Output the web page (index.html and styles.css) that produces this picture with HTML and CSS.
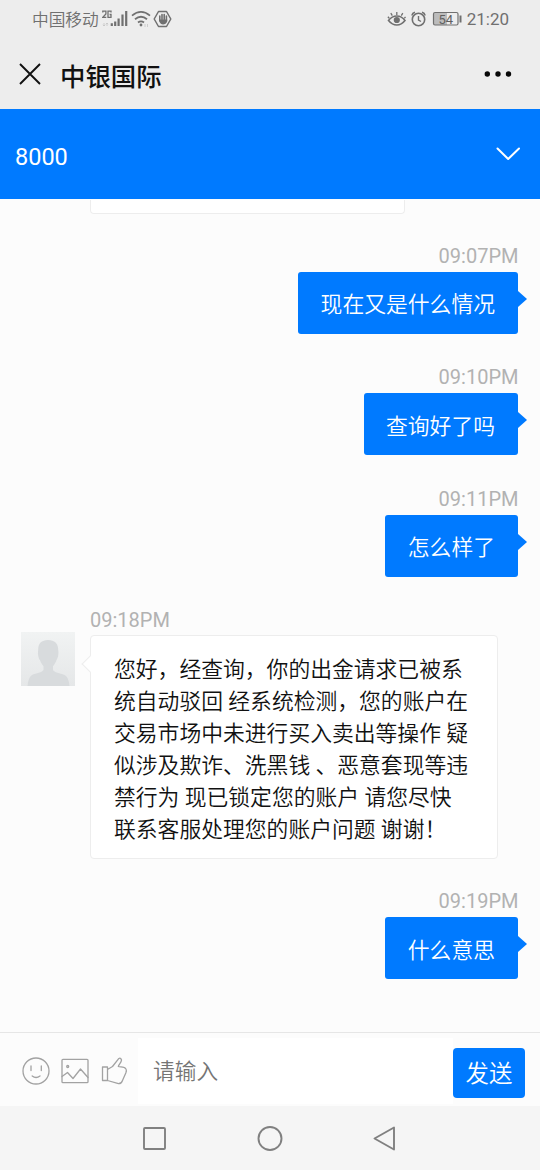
FILE: index.html
```html
<!DOCTYPE html>
<html lang="zh-CN">
<head>
<meta charset="utf-8">
<title>中银国际</title>
<link rel="stylesheet" href="styles.css">
</head>
<body>
<div class="app">
  <header class="top">
    <div class="status">
      <span class="carrier">中国移动</span>
      <svg class="signal" width="72" height="20" viewBox="0 0 72 20" fill="none" stroke="#707070">
        <g stroke-width="1.3">
          <path d="M.8 3.5V2.2H3.9V5L.8 8.3H4.3M9 3.4V2.2H6V8.3H9V5.5H7.6"/>
        </g>
        <path d="M2 14v3M.8 15.8L2 17l1.200-1.200M5 17v-3M3.800 15.200L5 14l1.200 1.200" stroke="#c4c4c4" stroke-width=".8"/>
        <path d="M9.800 14.200V17M13.200 12.500V17M16.600 9.500V17M20.500 5.500V17M24.200 2V17" stroke-width="2.200"/>
        <path d="M30 6.600Q39 -.8 48 6.600M33 10.200Q39 5.200 45 10.200M36 13.500Q39 11.200 42 13.500" stroke-width="1.800"/>
        <circle cx="39" cy="16" r="1.400" fill="#707070" stroke="none"/>
        <path d="M43 15v3M45.500 18v-3" stroke="#c4c4c4" stroke-width=".8"/>
        <path d="M56.500 2.500h8L68.800 10l-4.300 7.500h-8L52.200 10z" stroke-width="1.500" stroke-linejoin="round"/>
        <path d="M57.800 7v4.500M60 5.500v5M62.200 5.500v5M64.400 7v5" stroke-width="1.600" stroke-linecap="round"/>
        <path d="M57 10.500h8.200v2Q64 15.500 61 15.500 58.600 15.500 57 12z" fill="#707070" stroke="none"/>
      </svg>
      <span class="spacer"></span>
      <svg class="alerts" width="76" height="20" viewBox="0 0 76 20" fill="none" stroke="#707070">
        <path d="M1.500 11.500Q5 7 9.800 7T18 11.500Q14.500 16 9.800 16T1.500 11.500z" stroke-width="1.600"/>
        <circle cx="9.800" cy="11" r="3.100" fill="#707070" stroke="none"/>
        <path d="M9.800 6V3M5.300 6.600L3.800 4.200M14.300 6.600L15.800 4.200M2.200 9.300L.9 7.800M17.300 9.300l1.200-1.500" stroke-width="1.300"/>
        <circle cx="31.500" cy="10.500" r="6.200" stroke-width="1.600"/>
        <path d="M31.500 7V11L34 12.500M24.800 6.500Q25.300 4 28 3.300M38.200 6.500Q37.700 4 35 3.300" stroke-width="1.400"/>
        <path d="M47 4h13v12H47z" fill="#bcbcbc" stroke="none"/>
        <rect x="46.500" y="3.500" width="24.500" height="12.500" rx="1.500" stroke-width="1.200"/>
        <path d="M73.500 6.500v7" stroke-width="2"/>
        <text x="51.500" y="14.500" class="battery">54</text>
      </svg>
      <span class="clock">21:20</span>
    </div>
    <div class="title-row">
      <svg width="24" height="24" viewBox="0 0 24 24" fill="none" stroke="#111" stroke-width="1.900"><path d="M2 2L22 22M22 2L2 22"/></svg>
      <h1 class="title">中银国际</h1>
      <svg class="more" width="28" height="8" viewBox="0 0 28 8"><circle cx="3.300" cy="4" r="2.700"/><circle cx="14" cy="4" r="2.700"/><circle cx="24.500" cy="4" r="2.700"/></svg>
    </div>
  </header>
  <section class="agent">
    <span>8000</span>
    <svg class="chevron" width="26" height="16" viewBox="0 0 26 16" fill="none" stroke="#fff" stroke-width="2" stroke-linecap="round" stroke-linejoin="round"><path d="M2.500 2.500L13.200 13 24 2.500"/></svg>
  </section>
  <main class="chat">
    <div class="previous"></div>
    <div class="message sent"><time class="time">09:07PM</time><div class="bubble">现在又是什么情况</div></div>
    <div class="message sent"><time class="time">09:10PM</time><div class="bubble">查询好了吗</div></div>
    <div class="message sent"><time class="time">09:11PM</time><div class="bubble">怎么样了</div></div>
    <div class="message received">
      <svg class="avatar" width="54" height="54" viewBox="0 0 54 54">
        <defs><linearGradient id="avatar-bg" x2="0" y2="1"><stop stop-color="#f1f3f3"/><stop offset="1" stop-color="#e5e7e8"/></linearGradient></defs>
        <path fill="url(#avatar-bg)" d="M0 0h54v54H0z"/>
        <path fill="#d8dbdd" d="M27 8C20.500 8 17 11.500 17.200 18 16.500 22 17.500 26.500 19 28.200 20 31 21.500 33 22.500 34.200V38C21.500 40.500 15 41 11 43 8 45 7 49 6.500 54H48.500C48 49 47 45 43.500 43 39 41 33 40.500 32 38V34.200C33 33 34.500 31 35.400 28.200 36.800 26.500 38 22 37.200 18 37.400 11.500 33.500 8 27 8z"/>
      </svg>
      <div class="content">
        <time class="time">09:18PM</time>
        <div class="bubble">您好，经查询，你的出金请求已被系<br>统自动驳回 经系统检测，您的账户在<br>交易市场中未进行买入卖出等操作 疑<br>似涉及欺诈、洗黑钱 、恶意套现等违<br>禁行为 现已锁定您的账户 请您尽快<br>联系客服处理您的账户问题 谢谢！</div>
      </div>
    </div>
    <div class="message sent after-reply"><time class="time">09:19PM</time><div class="bubble">什么意思</div></div>
  </main>
  <footer class="composer">
    <div class="tools">
      <svg width="28" height="28" viewBox="0 0 28 28"><circle cx="14" cy="14" r="13"/><path d="M9 9v4.500M19.300 9v4.500M10.200 19Q14 22 18 19"/></svg>
      <svg width="28" height="28" viewBox="0 0 28 28"><rect x="1" y="2.300" width="26" height="23.400" rx="1"/><path d="M1 19.500L6.500 15.500 12 21.500 19.500 12 27 20.500"/><circle cx="6.700" cy="9.500" r="1"/></svg>
      <svg width="28" height="28" viewBox="0 0 28 28"><path d="M2.500 10h5v13.500h-5zM7.500 12.500L12.500 9.500 18.500 1.800Q20.800.2 21.500 3C21.500 5.500 18.500 8 18.300 9.500 20 10.500 24.500 9 26 12Q26.800 13.500 25.800 16L22.500 23.500Q21.500 26.800 18.500 26.700L7.500 23.500"/></svg>
    </div>
    <div class="input">请输入</div>
    <button class="send">发送</button>
  </footer>
  <nav class="nav">
    <svg width="270" height="30" viewBox="0 0 270 30" fill="none" stroke="#808080" stroke-width="1.900" stroke-linejoin="round"><rect x="9" y="5" width="21" height="21" rx="1"/><circle cx="135" cy="15.500" r="11.500"/><path d="M239.500 15.500L259 4.500V26.500z"/></svg>
  </nav>
</div>
</body>
</html>
```

FILE: styles.css
```css
* { box-sizing: border-box; }
body { margin: 0; font-family: Roboto, "Noto Sans CJK SC", sans-serif; }
svg { display: block; flex: none; }
.app { width: 540px; height: 1170px; display: flex; flex-direction: column; background: #fcfcfc; overflow: hidden; }
.top { height: 109px; flex: none; background: #ededed; }
.status { height: 38px; padding: 0 31px 0 32px; display: flex; align-items: center; color: #707070; font-size: 16.700px; line-height: 38px; }
.carrier { width: 67px; padding-top: 3px; font-weight: 350; white-space: nowrap; }
.signal { margin-left: 3px; }
.spacer { flex: 1; }
.alerts { margin-right: 4px; }
.battery { font-size: 13px; fill: #606060; stroke: none; }
.clock { font-size: 17px; }
.title-row { height: 71px; padding: 0 28px 0 18px; display: flex; align-items: center; }
.title { margin: 6px 0 0 18px; font-size: 25.400px; line-height: 36px; font-weight: 500; color: #111; }
.more { margin-left: auto; fill: #080808; }
.agent { height: 90px; flex: none; margin-bottom: 0.500px; padding: 6px 19px 0 15px; display: flex; align-items: center; justify-content: space-between; background: #007aff; color: #fff; font-size: 23.500px; }
.chevron { margin-bottom: 6px; }
.chat { height: 832.500px; flex: none; overflow: hidden; }
.previous { width: 315px; height: 14px; margin: 0 0 -1.500px 90px; background: #fff; border: 1px solid #ededed; border-top: 0; border-radius: 0 0 4px 4px; }
.message { margin-top: 27.500px; }
.sent { display: flex; flex-direction: column; align-items: flex-end; padding-right: 22.500px; }
.after-reply { margin-top: 26.500px; }
.time { display: block; height: 32px; line-height: 32px; font-size: 20px; color: #b2b2b2; }
.sent .time { margin-right: -1px; }
.bubble { position: relative; font-size: 21.800px; line-height: 32px; font-weight: 350; white-space: nowrap; }
.sent .bubble { height: 62px; padding: 17.500px 22.500px 12.500px; color: #fff; background: #007aff; border-radius: 3px; }
.sent .bubble::after { content: ""; position: absolute; left: 100%; top: 19px; border: 8px solid transparent; border-left: 9px solid #007aff; border-right: 0; }
.received { display: flex; align-items: flex-start; padding-left: 21px; }
.avatar { margin: 27.500px 15px 0 0; }
.received .time { height: 30.500px; }
.received .bubble { width: 408px; height: 224px; padding: 18.500px 23px; color: #111; background: #fff; border: 1px solid #ededed; border-radius: 4px; }
.received .bubble::before { content: ""; position: absolute; left: -7px; top: 22px; width: 11px; height: 11px; transform: rotate(45deg); background: #fff; border: solid #ededed; border-width: 0 0 1px 1px; }
.composer { height: 74px; flex: none; display: flex; align-items: center; padding: 2px 15px 0 22px; border-top: 1px solid #e6e6e6; }
.tools { display: flex; gap: 11px; width: 116px; flex: none; fill: none; stroke: #a2a2a2; stroke-width: 1.300; stroke-linejoin: round; stroke-linecap: round; }
.input { flex: 1; height: 66px; padding: 0 15px; line-height: 67px; background: #fff; color: #757575; font-size: 21.700px; font-weight: 350; }
.send { width: 72px; height: 50px; margin-top: 5px; padding: 0 0 3px; border: 0; border-radius: 4px; background: #007aff; color: #fff; font: 350 23.400px "Noto Sans CJK SC", sans-serif; }
.nav { height: 64px; flex: none; padding-top: 17px; display: flex; justify-content: center; background: #f5f5f5; }
```
